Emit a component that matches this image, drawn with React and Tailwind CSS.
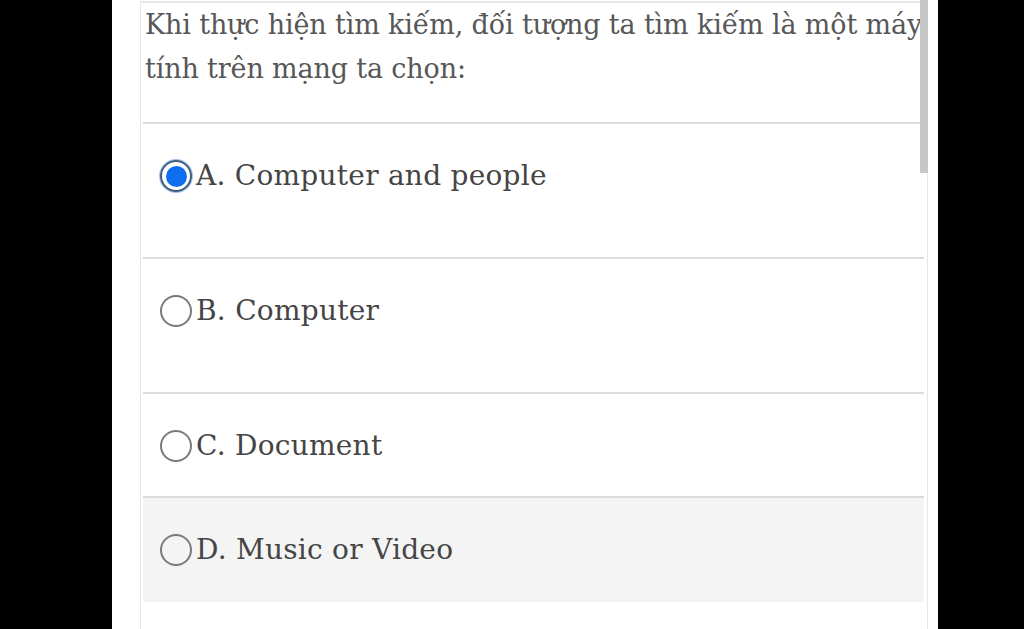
const serif = { fontFamily: '"DejaVu Serif", "Liberation Serif", serif' };

const options = [
  { key: "A", label: "A. Computer and people", checked: true, h: "h-[135px]" },
  { key: "B", label: "B. Computer", checked: false, h: "h-[135px]" },
  { key: "C", label: "C. Document", checked: false, h: "h-[104px]" },
  { key: "D", label: "D. Music or Video", checked: false, h: "h-[104px]", shaded: true },
];

function Radio({ checked }) {
  if (checked) {
    return (
      <span className="flex h-[32px] w-[32px] shrink-0 items-center justify-center rounded-full border-2 border-[#41597a] shadow-[0_0_0_1px_#9cc3f0]">
        <span className="h-[21px] w-[21px] rounded-full bg-[#0f6ef0]" />
      </span>
    );
  }
  return <span className="h-[32px] w-[32px] shrink-0 rounded-full border-2 border-[#7a7a7a]" />;
}

export default function App() {
  return (
    <div className="flex h-[629px] w-[1024px] overflow-hidden bg-black" style={serif}>
      <div className="relative ml-[112px] h-full w-[826px] bg-white">
        <div className="ml-[28px] mt-[1px] h-full w-[788px] border-x border-t-2 border-[#e6e6e6] pl-[2px] pr-[3px]">
          <div className="h-[121px] border-b-2 border-[#dcdcdc] pl-[2px] text-[27px] leading-[44px] tracking-[-0.15px] text-[#575757]">
            Khi thực hiện tìm kiếm, đối tượng ta tìm kiếm là một máy tính trên mạng ta chọn:
          </div>
          {options.map((o) => (
            <div
              key={o.key}
              className={`${o.h} ${o.shaded ? "bg-[#f4f4f4]" : "border-b-2 border-[#dcdcdc]"} flex items-start pl-[17px] pt-[31px]`}
            >
              <label className="flex h-[42px] items-center text-[28px] text-[#454545]">
                <Radio checked={o.checked} />
                <span className="ml-[4px] tracking-[0.25px]">{o.label}</span>
              </label>
            </div>
          ))}
        </div>
        <div className="absolute left-[808px] top-0 h-[173px] w-[8px] bg-[#c6c6c6]" />
      </div>
    </div>
  );
}
